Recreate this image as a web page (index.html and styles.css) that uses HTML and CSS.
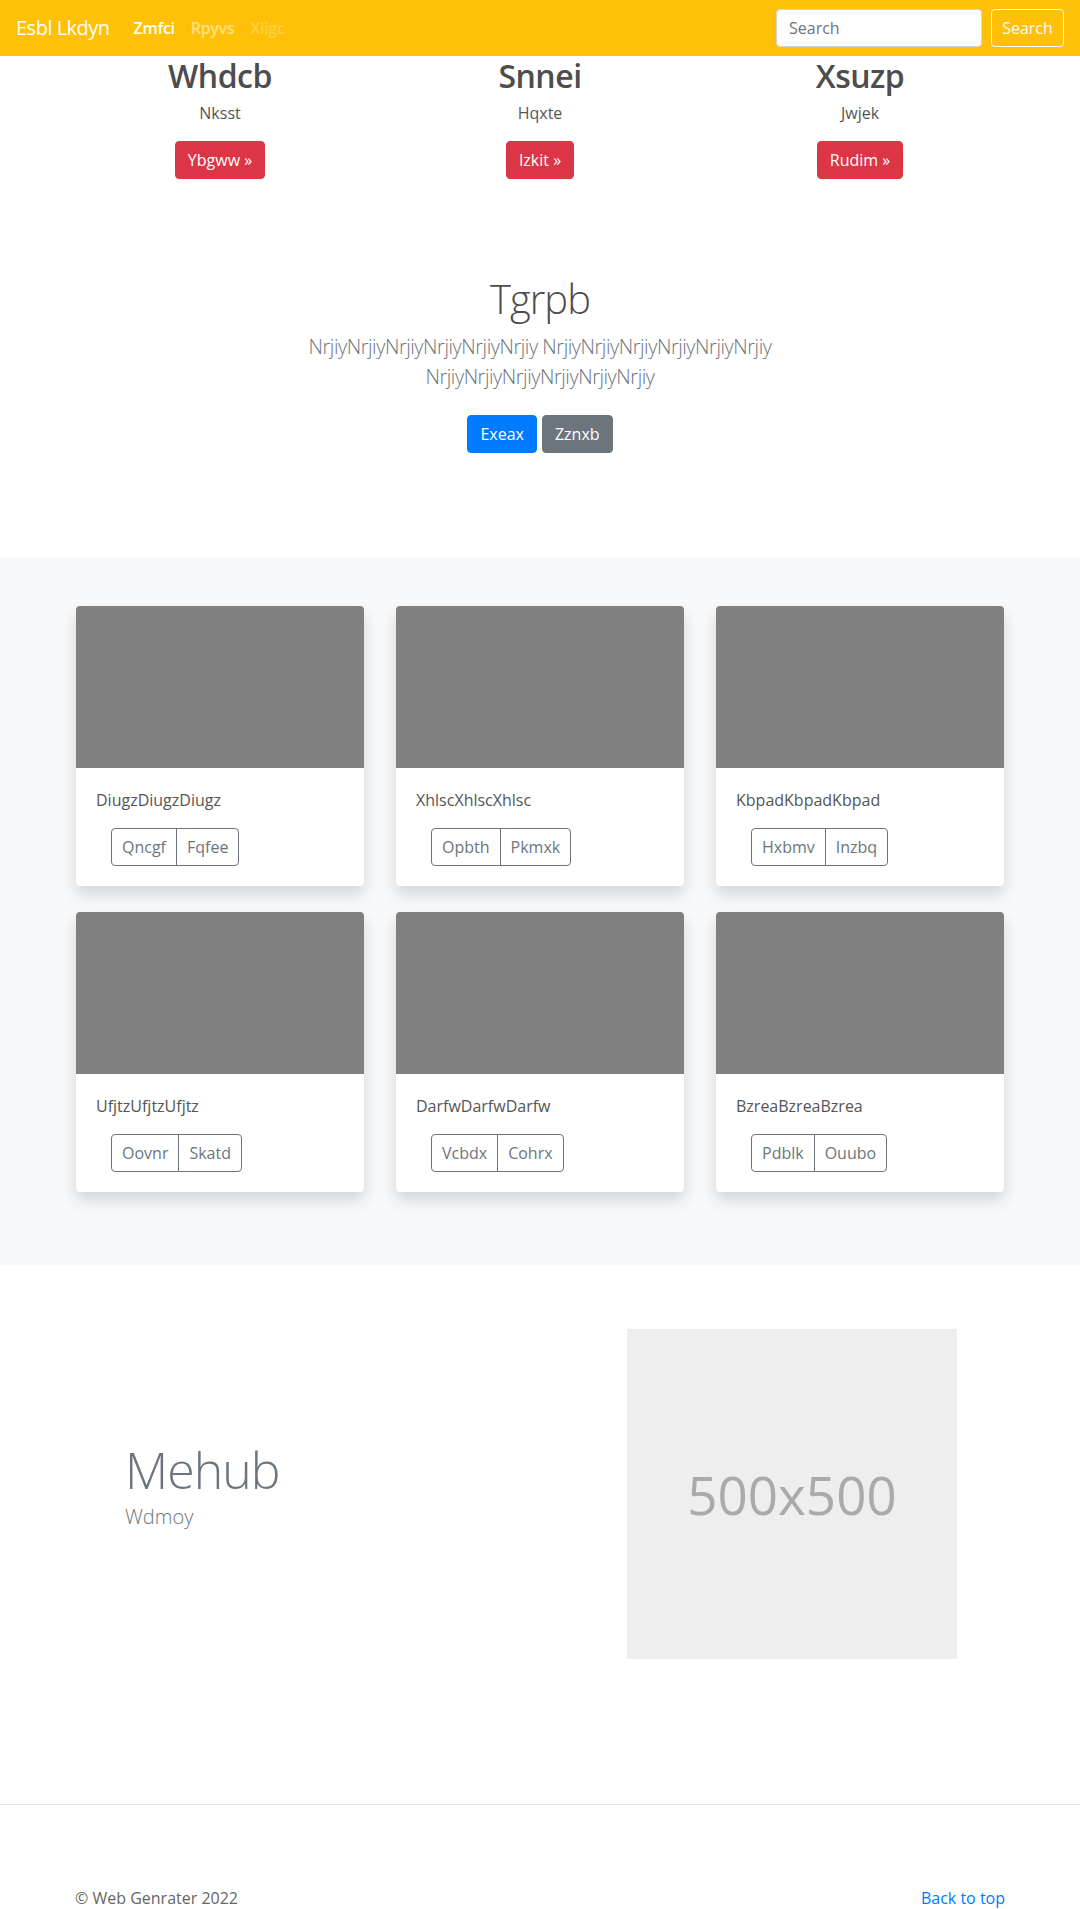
FILE: index.html
```html
<!DOCTYPE html>
<html lang="en">
<head>
<meta charset="utf-8">
<title>Esbl Lkdyn</title>
<link rel="stylesheet" href="styles.css">
</head>
<body>
<header class="navbar">
  <a class="brand" href="#">Esbl Lkdyn</a>
  <nav class="nav">
    <a class="nav-link active" href="#">Zmfci</a>
    <a class="nav-link" href="#">Rpyvs</a>
    <a class="nav-link disabled" href="#">Xiigc</a>
  </nav>
  <form class="search">
    <input class="search-input" type="text" placeholder="Search">
    <button class="btn btn-outline-light" type="button">Search</button>
  </form>
</header>

<main>
  <section class="features">
    <div class="feature">
      <h2 class="feature-title">Whdcb</h2>
      <p class="feature-text">Nksst</p>
      <a class="btn btn-danger" href="#">Ybgww &raquo;</a>
    </div>
    <div class="feature">
      <h2 class="feature-title">Snnei</h2>
      <p class="feature-text">Hqxte</p>
      <a class="btn btn-danger" href="#">Izkit &raquo;</a>
    </div>
    <div class="feature">
      <h2 class="feature-title">Xsuzp</h2>
      <p class="feature-text">Jwjek</p>
      <a class="btn btn-danger" href="#">Rudim &raquo;</a>
    </div>
  </section>

  <section class="jumbo">
    <h1 class="jumbo-title">Tgrpb</h1>
    <p class="lead jumbo-lead">NrjiyNrjiyNrjiyNrjiyNrjiyNrjiy NrjiyNrjiyNrjiyNrjiyNrjiyNrjiy NrjiyNrjiyNrjiyNrjiyNrjiyNrjiy</p>
    <div class="jumbo-actions">
      <a class="btn btn-primary" href="#">Exeax</a>
      <a class="btn btn-secondary" href="#">Zznxb</a>
    </div>
  </section>

  <section class="album">
    <div class="album-grid">
      <div class="card">
        <div class="card-img"></div>
        <div class="card-body">
          <p class="card-text">DiugzDiugzDiugz</p>
          <div class="btn-group"><button class="btn-group-item" type="button">Qncgf</button><button class="btn-group-item" type="button">Fqfee</button></div>
        </div>
      </div>
      <div class="card">
        <div class="card-img"></div>
        <div class="card-body">
          <p class="card-text">XhlscXhlscXhlsc</p>
          <div class="btn-group"><button class="btn-group-item" type="button">Opbth</button><button class="btn-group-item" type="button">Pkmxk</button></div>
        </div>
      </div>
      <div class="card">
        <div class="card-img"></div>
        <div class="card-body">
          <p class="card-text">KbpadKbpadKbpad</p>
          <div class="btn-group"><button class="btn-group-item" type="button">Hxbmv</button><button class="btn-group-item" type="button">Inzbq</button></div>
        </div>
      </div>
      <div class="card">
        <div class="card-img"></div>
        <div class="card-body">
          <p class="card-text">UfjtzUfjtzUfjtz</p>
          <div class="btn-group"><button class="btn-group-item" type="button">Oovnr</button><button class="btn-group-item" type="button">Skatd</button></div>
        </div>
      </div>
      <div class="card">
        <div class="card-img"></div>
        <div class="card-body">
          <p class="card-text">DarfwDarfwDarfw</p>
          <div class="btn-group"><button class="btn-group-item" type="button">Vcbdx</button><button class="btn-group-item" type="button">Cohrx</button></div>
        </div>
      </div>
      <div class="card">
        <div class="card-img"></div>
        <div class="card-body">
          <p class="card-text">BzreaBzreaBzrea</p>
          <div class="btn-group"><button class="btn-group-item" type="button">Pdblk</button><button class="btn-group-item" type="button">Ouubo</button></div>
        </div>
      </div>
    </div>
  </section>

  <section class="split">
    <div class="split-text">
      <h2 class="split-title">Mehub</h2>
      <p class="lead split-lead">Wdmoy</p>
    </div>
    <div class="split-media">
      <div class="placeholder">500x500</div>
    </div>
  </section>
</main>

<footer class="footer">
  <div class="footer-inner">
    <p class="footer-copy">&copy; Web Genrater 2022</p>
    <a class="footer-link" href="#">Back to top</a>
  </div>
</footer>
</body>
</html>
```

FILE: styles.css
```css
* {
  box-sizing: border-box;
}

body {
  margin: 0;
  font-family: "Open Sans", "Noto Sans", "DejaVu Sans", sans-serif;
  font-size: 16px;
  line-height: 1.5;
  color: #555;
  background: #fff;
}

/* Navbar */
.navbar {
  height: 56px;
  background: #ffc107;
  display: flex;
  align-items: center;
  padding: 0 16px;
}

.brand {
  font-size: 20px;
  line-height: 30px;
  letter-spacing: -0.5px;
  color: #fff;
  text-decoration: none;
  margin-right: 16px;
}

.nav {
  display: flex;
}

.nav-link {
  padding: 8px;
  color: rgba(255, 255, 255, 0.5);
  text-decoration: none;
  font-weight: 600;
  letter-spacing: -0.3px;
}

.nav-link.active {
  color: #fff;
}

.nav-link.disabled {
  color: rgba(255, 255, 255, 0.25);
}

.search {
  margin: 0 0 0 auto;
  display: flex;
  gap: 9px;
}

.search-input {
  width: 206px;
  height: 38px;
  border: 1px solid #ced4da;
  border-radius: 4px;
  padding: 6px 12px;
  font-family: inherit;
  font-size: 16px;
  color: #495057;
  background: #fff;
}

.search-input::placeholder {
  color: #6c757d;
}

/* Buttons */
.btn {
  display: inline-block;
  height: 38px;
  padding: 6px 12px;
  font-family: inherit;
  font-size: 16px;
  line-height: 24px;
  border: 1px solid transparent;
  border-radius: 4px;
  color: #fff;
  text-decoration: none;
  white-space: nowrap;
}

.btn-outline-light {
  width: 73px;
  padding: 6px 0;
  text-align: center;
  background: transparent;
  border-color: #f8f9fa;
  color: #f8f9fa;
}

.btn-danger {
  background: #dc3545;
  border-color: #dc3545;
}

.btn-primary {
  background: #007bff;
  border-color: #007bff;
}

.btn-secondary {
  background: #6c757d;
  border-color: #6c757d;
}

/* Feature columns */
.features {
  width: 960px;
  margin: 0 auto;
  display: grid;
  grid-template-columns: repeat(3, 1fr);
  padding-top: 1px;
}

.feature {
  display: flex;
  flex-direction: column;
  align-items: center;
  text-align: center;
}

.feature-title {
  margin: 0 0 6px;
  font-size: 32px;
  font-weight: 600;
  line-height: 1.2;
  letter-spacing: -0.5px;
  color: #4d4d4d;
}

.feature-text {
  margin: 0 0 16px;
}

/* Jumbotron */
.jumbo {
  text-align: center;
  padding: 96px 0 104px;
}

.jumbo-title {
  margin: 0 0 9px;
  font-size: 40px;
  font-weight: 300;
  line-height: 1.2;
  letter-spacing: -1px;
  color: #4d4d4d;
}

.lead {
  font-size: 20px;
  font-weight: 300;
  line-height: 1.5;
  color: #6c757d;
}

.jumbo-lead {
  max-width: 610px;
  margin: 0 auto 23px;
  letter-spacing: -0.45px;
}

.jumbo-actions {
  display: flex;
  justify-content: center;
  gap: 5px;
}

/* Album */
.album {
  background: #f8f9fa;
  padding: 49px 0 73px;
}

.album-grid {
  width: 928px;
  margin: 0 auto;
  display: grid;
  grid-template-columns: repeat(3, 288px);
  column-gap: 32px;
  row-gap: 26px;
}

.card {
  background: #fff;
  border-radius: 4px;
  overflow: hidden;
  box-shadow: 0 8px 16px rgba(0, 0, 0, 0.15);
}

.card-img {
  height: 162px;
  background: #808080;
}

.card-body {
  padding: 20px;
}

.card-text {
  margin: 0 0 16px;
}

.btn-group {
  display: inline-flex;
  margin-left: 15px;
}

.btn-group-item {
  height: 38px;
  padding: 6px 10px;
  font-family: inherit;
  font-size: 16px;
  line-height: 24px;
  color: #6c757d;
  background: transparent;
  border: 1px solid #6c757d;
  border-radius: 0;
}

.btn-group-item:first-child {
  border-radius: 4px 0 0 4px;
}

.btn-group-item:last-child {
  margin-left: -1px;
  border-radius: 0 4px 4px 0;
}

/* Split feature */
.split {
  width: 930px;
  margin: 0 auto;
  padding: 64px 0 145px;
  display: grid;
  grid-template-columns: 1fr 1fr;
  column-gap: 30px;
  align-items: center;
}

.split-text {
  padding-left: 50px;
}

.split-title {
  margin: 0 0 2px;
  font-size: 50px;
  font-weight: 300;
  line-height: 1.2;
  letter-spacing: -1px;
  color: #6c757d;
}

.split-lead {
  margin: 0 0 16px;
}

.placeholder {
  width: 330px;
  height: 330px;
  margin-left: 72px;
  background: #eee;
  color: #aaa;
  display: flex;
  align-items: center;
  justify-content: center;
  font-size: 53px;
}

/* Footer */
.footer {
  border-top: 1px solid #e5e5e5;
  padding: 81px 0 48px;
}

.footer-inner {
  width: 930px;
  margin: 0 auto;
  display: flex;
  justify-content: space-between;
  align-items: flex-start;
}

.footer-copy {
  margin: 0;
  color: #666;
}

.footer-link {
  color: #007bff;
  text-decoration: none;
}
```
